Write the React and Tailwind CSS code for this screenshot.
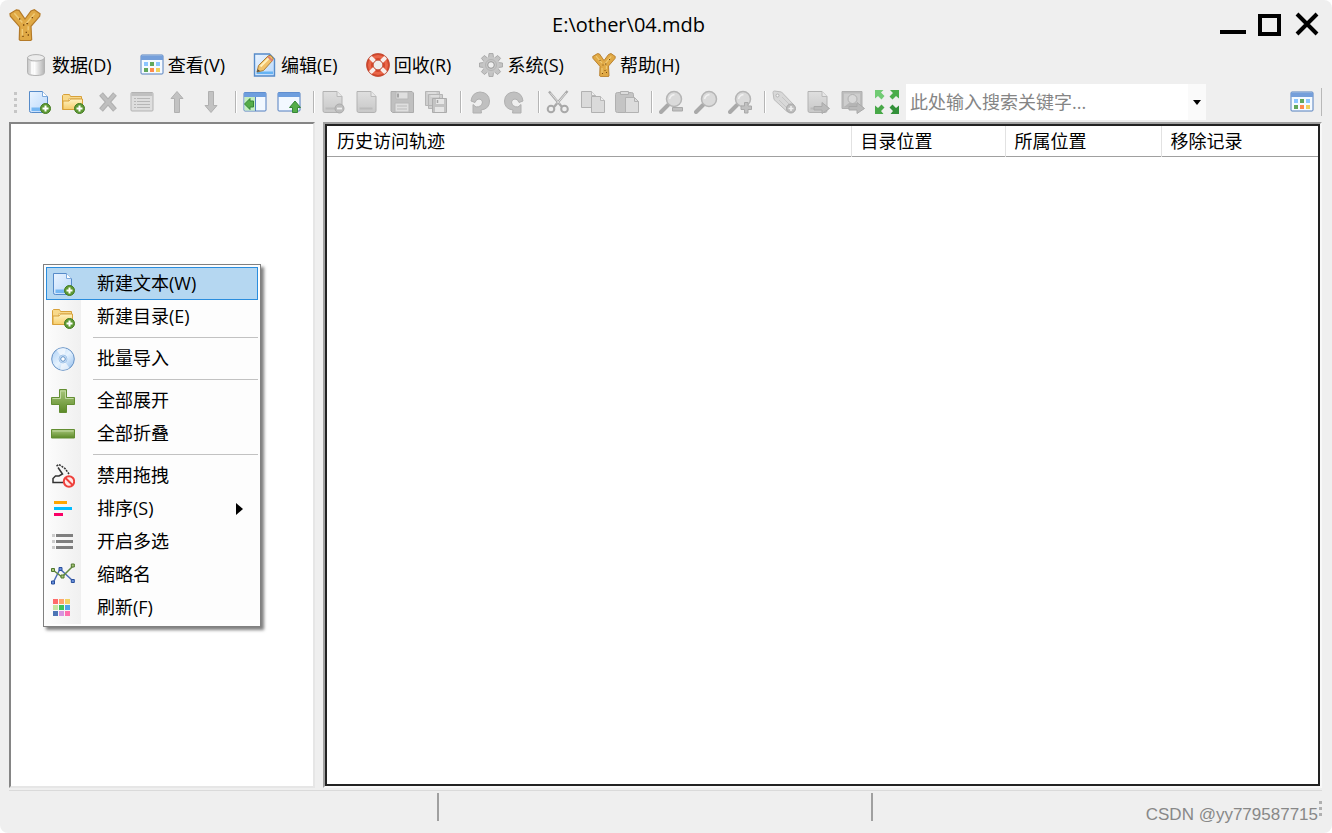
import clsx from 'clsx';

const Svg = ({ children, className = 'h-6 w-6' }) => (
  <svg viewBox="0 0 24 24" fill="none" className={clsx('shrink-0', className)} aria-hidden="true">
    {children}
  </svg>
);

const Gradients = () => (
  <svg className="absolute h-0 w-0" aria-hidden="true">
    <defs>
      <linearGradient id="paper" x1="0" y1="0" x2="1" y2="1">
        <stop offset="0" stopColor="#eaf4ff" />
        <stop offset="1" stopColor="#b9d8fb" />
      </linearGradient>
      <linearGradient id="gray" x1="0" y1="0" x2="0" y2="1">
        <stop offset="0" stopColor="#dfdfdf" />
        <stop offset="1" stopColor="#c8c8c8" />
      </linearGradient>
      <linearGradient id="metal" x1="0" y1="0" x2="1" y2="0">
        <stop offset="0" stopColor="#c4c4c4" />
        <stop offset="0.4" stopColor="#ffffff" />
        <stop offset="1" stopColor="#b2b2b2" />
      </linearGradient>
      <linearGradient id="green" x1="0" y1="0" x2="0" y2="1">
        <stop offset="0" stopColor="#a9c77c" />
        <stop offset="1" stopColor="#5c8a27" />
      </linearGradient>
      <linearGradient id="folder" x1="0" y1="0" x2="0" y2="1">
        <stop offset="0" stopColor="#fff3c4" />
        <stop offset="1" stopColor="#f6cd6b" />
      </linearGradient>
      <linearGradient id="disc" x1="0" y1="0" x2="1" y2="1">
        <stop offset="0" stopColor="#a9cdf3" />
        <stop offset="0.5" stopColor="#e6f3ff" />
        <stop offset="1" stopColor="#8cb9ea" />
      </linearGradient>
    </defs>
  </svg>
);

const PlusBadge = () => (
  <>
    <circle cx="18.500" cy="18.500" r="5" fill="#5f9a35" stroke="#437a20" />
    <path d="M18.500 15.500v6M15.500 18.500h6" stroke="#fff" strokeWidth="2" />
  </>
);

const Logo = ({ className }) => (
  <Svg className={className}>
    <path
      d="M.700 3.500 5.500.600l2 .400 4.500 6.500 4.500-6 2.500-1 4.300 3-.300 2-6.500 7.500.500 10-1 .700H8.500l-.800-.800.300-9.500-7-8Z"
      fill="#e0a945"
      stroke="#b47a28"
      strokeWidth=".9"
    />
    <path d="m4 3.200 6 7M19.200 3.400l-6.700 8M10 15v5M14.400 13v3" stroke="#efca76" strokeWidth="1.100" />
    <path d="M10.500 12h1M13 11h1.300M12.500 17.500h1M10 20.500h1M14 19.500h1M7.500 7.500h1M17 6.500h1" stroke="#79480d" />
  </Svg>
);

const NewTextIcon = () => (
  <Svg>
    <path d="M2.500 1.500h13l5 5v14.200q0 1.800-1.800 1.800H4.300q-1.800 0-1.800-1.800Z" fill="url(#paper)" stroke="#568bc9" />
    <path d="M15.500 1.500v5h5" fill="#fff" stroke="#7ba9dc" />
    <path d="M4.500 17.500h11v3.500h-11Z" fill="#75b7f2" />
    <PlusBadge />
  </Svg>
);

const NewFolderIcon = () => (
  <Svg>
    <path d="M1.500 19.500v-14l1-1h6l1 2h11v13Z" fill="#f8d98b" stroke="#d8a13a" />
    <path d="M7.500 8.500h12v3h-12Z" fill="#fff" stroke="#e6c272" />
    <path d="M2 19.500v-8.500h6l1.500-2H21.500v10.500Z" fill="url(#folder)" stroke="#d8a13a" />
    <PlusBadge />
  </Svg>
);

const DatabaseIcon = () => (
  <Svg>
    <path d="M3.500 4.500v15q0 3 8.500 3t8.500-3v-15" fill="url(#metal)" stroke="#b3b3b3" />
    <ellipse cx="12" cy="4.800" rx="8.500" ry="3.200" fill="#ececec" stroke="#b0b0b0" />
    <path d="M8 9v12" stroke="#fff" strokeWidth="1.500" />
  </Svg>
);

const CalendarIcon = () => (
  <Svg>
    <rect x="1" y="2" width="22" height="19" rx="1" fill="#f5faff" stroke="#5580be" />
    <path d="M1 2.500h22v4.500H1Z" fill="#759fda" />
    <path d="M4 9h4v4H4ZM16 9h4v4h-4Z" fill="#8bc5ff" />
    <path d="M10 9h4v4h-4ZM4 15h4v4H4Z" fill="#61a75b" />
    <path d="M10 15h4v4h-4Z" fill="#ff8a4d" />
    <path d="M16 15h4v4h-4Z" fill="#efd15b" />
  </Svg>
);

const EditIcon = () => (
  <Svg>
    <path d="M1.500 1h15l5 5v17h-20Z" fill="url(#paper)" stroke="#568bc9" strokeWidth="1.400" />
    <path d="M3.500 18.500H20v2.500H3.500Z" fill="#65b3f3" />
    <path d="m4 19 1.500-6.500L15 3q2-1.500 4 .5t.5 4L10.500 17.500Z" fill="#f1c26a" stroke="#a97e39" />
    <path d="m7.500 13.500 8.500-8.500" stroke="#fff0bc" strokeWidth="2" />
    <path d="m15 3.500 4.500 4.500" stroke="#df8171" strokeWidth="2" />
    <path d="m4 19 .700-2.800L7 18Z" fill="#4e4a45" />
  </Svg>
);

const LifebuoyIcon = () => (
  <Svg>
    <circle cx="12" cy="12" r="8.200" stroke="#d4472b" strokeWidth="7" />
    <circle cx="12" cy="12" r="8.500" stroke="#e9674a" strokeWidth="3" />
    <path d="m4 4 4.500 4.500M20 4l-4.500 4.500M4 20l4.500-4.500M20 20l-4.500-4.500" stroke="#f8eeeb" strokeWidth="4" />
    <circle cx="12" cy="12" r="11.400" stroke="#b84a35" strokeWidth=".700" />
    <circle cx="12" cy="12" r="4.800" stroke="#b84a35" strokeWidth=".700" />
  </Svg>
);

// eight teeth on a two-tone ring
const GearIcon = () => (
  <Svg>
    {[0, 45, 90, 135].map((angle) => (
      <path
        key={angle}
        d="M10 .500h4l.500 4v15l-.500 4h-4l-.500-4v-15Z"
        transform={`rotate(${angle} 12 12)`}
        fill="#c4c4c4"
        stroke="#a2a2a2"
        strokeWidth=".8"
      />
    ))}
    <circle cx="12" cy="12" r="5.800" stroke="#c6c6c6" strokeWidth="5" />
    <circle cx="12" cy="12" r="5.500" stroke="#b4b4b4" />
    <circle cx="12" cy="12" r="3.300" fill="#efefef" stroke="#999" />
  </Svg>
);

const DeleteIcon = () => (
  <Svg>
    <path d="m5 4 14 16M19 4 5 20" stroke="#b0b0b0" strokeWidth="5" />
    <path d="m5.500 4.500 13 15M18.500 4.500l-13 15" stroke="#bfbfbf" strokeWidth="3" />
  </Svg>
);

const PropertiesIcon = () => (
  <Svg>
    <rect x="1" y="2.500" width="22" height="18.500" rx="1" fill="#dedede" stroke="#b3b3b3" />
    <path d="M1.500 3h21v3h-21Z" fill="#c0c0c0" />
    <path d="M4 8.500h2M4 11.500h2M4 14.500h2M4 17.500h2M7 8.500h13M7 11.500h13M7 14.500h13M7 17.500h13" stroke="#b7b7b7" />
  </Svg>
);

const ArrowIcon = ({ down }) => (
  <Svg>
    <path
      d={down ? 'M9.500 1.500h5v14H18l-6 7-6-7h3.500Z' : 'M9.500 22.500h5v-14H18l-6-7-6 7h3.500Z'}
      fill="#c2c2c2"
      stroke="#b0b0b0"
    />
  </Svg>
);

const PanelIcon = ({ up }) => (
  <Svg>
    <rect x="1" y="2.500" width="22" height="18.500" rx="1" fill="#f2f8ff" stroke="#527fc0" />
    <path d="M1 2.500h22V7H1Z" fill="#6e9ede" />
    {up ? (
      <path d="M15.500 22.500h5v-5h3L18 11l-5.500 6.500h3Z" fill="#55ad48" stroke="#358637" />
    ) : (
      <>
        <path d="M1.500 7H12v13.500H1.500Z" fill="#c5efbf" />
        <path d="M12.500 7v14" stroke="#527fc0" />
        <path d="M10.500 11v6H7v2.500L1.500 14 7 8.500V11Z" fill="#55ad48" stroke="#358637" />
      </>
    )}
  </Svg>
);

const GrayPageIcon = ({ badge }) => (
  <Svg>
    <path d="M2 1.500h14l5 5v14.200q0 1.800-1.800 1.800H3.800q-1.800 0-1.800-1.800Z" fill="url(#gray)" stroke="#b2b2b2" />
    <path d="M16 1.500v5h5" fill="#e8e8e8" stroke="#bababa" />
    <path d="M4.500 18.500h13" stroke="#bbb" strokeWidth="2" />
    {badge === 'minus' && (
      <>
        <circle cx="18.500" cy="18.500" r="4.500" fill="#bdbdbd" stroke="#ababab" />
        <path d="M16 18.500h5" stroke="#eee" strokeWidth="1.800" />
      </>
    )}
    {badge === 'arrow' && <path d="M8 16.500h8v-4l7.500 6-7.500 5v-3.500H8Z" fill="#bbb" stroke="#aaa" />}
  </Svg>
);

const SaveIcon = () => (
  <Svg>
    <path d="M1 1.500h21l1.500 1.500v19.500H2.500L1 21Z" fill="#c0c0c0" stroke="#acacac" />
    <path d="M6 2h12v7H6ZM5 13h14v9H5Z" fill="#dfdfdf" stroke="#b8b8b8" />
    <path d="M8 3.500v4" stroke="#a5a5a5" strokeWidth="2" />
    <path d="M7 16h10M7 19h10" stroke="#bbb" />
  </Svg>
);

const SaveAllIcon = () => (
  <Svg>
    <path d="M1.500 1.500h14v14h-14ZM4.500 4.500h14v14h-14Z" fill="#cecece" stroke="#b5b5b5" />
    <path d="M3.500 3h9M6.500 6h9" stroke="#e2e2e2" strokeWidth="1.500" />
    <path d="M8.500 8.500h14v14h-14Z" fill="#c3c3c3" stroke="#acacac" />
    <path d="M12 9h8v5h-8ZM11 17h9v5h-9Z" fill="#e6e6e6" />
    <path d="M13.500 10v3" stroke="#a5a5a5" strokeWidth="1.500" />
  </Svg>
);

const TurnIcon = ({ flip }) => (
  <Svg>
    <path
      d="M3 11q1-8.500 9-9 9 .5 9.500 9 0 8-8.500 9l.5 3H5v-8.500l3 2.500q6 0 6.500-5-.5-3-3.500-3t-4 3.500Z"
      transform={flip ? 'matrix(-1 0 0 1 24 0)' : undefined}
      fill="#c0c0c0"
      stroke="#b0b0b0"
    />
  </Svg>
);

const CutIcon = () => (
  <Svg>
    <path d="M3 1.500 16 17M21.500 1 8 17" stroke="#aaa" strokeWidth="2.400" />
    <path d="m4.500 3 9 10.500M20 3l-9 10.500" stroke="#dedede" />
    <circle cx="5" cy="19" r="3.300" stroke="#a8a8a8" strokeWidth="2" />
    <circle cx="18.500" cy="19" r="3.300" stroke="#a8a8a8" strokeWidth="2" />
  </Svg>
);

const CopyIcon = () => (
  <Svg>
    <path d="M.500 1.500h10l4 4v12H.500Z" fill="#dadada" stroke="#b1b1b1" />
    <path d="M10.500 6.500h9l4 4v12h-13Z" fill="#dadada" stroke="#b1b1b1" />
    <path d="M10.500 1.500v4h4M19.500 6.500v4h4" fill="#eee" stroke="#b8b8b8" />
  </Svg>
);

const PasteIcon = () => (
  <Svg>
    <rect x=".500" y="2.500" width="18" height="20" rx="2" fill="#c4c4c4" stroke="#b0b0b0" />
    <path d="M5.500 4.500v-3h8v3Z" fill="#dcdcdc" stroke="#b0b0b0" />
    <path d="M10.500 7.500h9l4 4v11h-13Z" fill="#dcdcdc" stroke="#b2b2b2" />
    <path d="M19.500 7.500v4h4" stroke="#b2b2b2" />
  </Svg>
);

const ZoomIcon = ({ badge }) => (
  <Svg>
    <path d="m2 22 7-7" stroke="#a9a9a9" strokeWidth="4" strokeLinecap="round" />
    <circle cx="15" cy="9" r="7.500" fill="#dadada" stroke="#b5b5b5" strokeWidth="1.500" />
    <path d="M10.500 9q1-4 5-4.500" stroke="#f1f1f1" strokeWidth="1.500" />
    {badge === 'out' && <path d="M13.500 17.500h10V21h-10Z" fill="#c0c0c0" stroke="#a9a9a9" />}
    {badge === 'in' && (
      <path d="M16.500 12.500h3.500V16h3.500v3.500H20V23h-3.500v-3.500H13V16h3.500Z" fill="#c0c0c0" stroke="#a9a9a9" />
    )}
  </Svg>
);

const TagIcon = () => (
  <Svg>
    <path d="M1 2.500Q1 1 2.500 1l7 1L22 15l-6.500 7L2 9.500Z" fill="#d8d8d8" stroke="#bbb" />
    <circle cx="5.500" cy="5.500" r="1.500" fill="#f3f3f3" stroke="#b3b3b3" />
    <path d="m10 7 9 9M7 10l8 8" stroke="#c6c6c6" />
    <circle cx="19" cy="18.500" r="4.500" fill="#bdbdbd" stroke="#a7a7a7" />
    <path d="M19 16v5M16.500 18.500h5" stroke="#eee" strokeWidth="1.600" />
  </Svg>
);

const PictureIcon = () => (
  <Svg>
    <path d="M1 1.500h20v17H1Z" fill="#bcbcbc" stroke="#b0b0b0" />
    <path d="M3 3.500h16v13H3Z" fill="#cdcdcd" />
    <circle cx="11.500" cy="9" r="4.500" fill="#d8d8d8" stroke="#b0b0b0" />
    <path d="m3 17 5-4h7l4 4" fill="#b5b5b5" />
    <path d="M8 16.500h8v-4l7.500 6-7.500 5V20H8Z" fill="#bababa" stroke="#a9a9a9" />
  </Svg>
);

const ExpandIcon = () => (
  <Svg>
    <path d="M0 0h8.500L6 2.500l3.500 3.500L6.500 9.500 3 6 0 8.500Z" fill="#71cb74" />
    <path d="M24 0v8.500L21 6l-3.500 3.500-3-3L18 3l-3-3Z" fill="#4bac4b" />
    <path d="M0 24v-8.500L3 18l3.500-3.500 3 3L6 21l2.500 3Z" fill="#47a847" />
    <path d="M24 24h-8.500l2.500-3-3.500-3.500 3-3L21 18l3-2.500Z" fill="#329039" />
  </Svg>
);

const DiscIcon = () => (
  <Svg>
    <circle cx="12" cy="12" r="11.300" fill="url(#disc)" stroke="#6692c5" />
    <path d="m12 12-6.500-9q5-3 9.500-1.500ZM12 12l6.500 9q-5 3-9.500 1.500Z" fill="#fff" fillOpacity=".6" />
    <circle cx="12" cy="12" r="4" fill="#d4e8fc" stroke="#a5c6ea" />
    <circle cx="12" cy="12" r="2.300" fill="#fff" stroke="#5c8ec4" />
  </Svg>
);

const PlusIcon = () => (
  <Svg>
    <path d="M8.500.5h7v8h8v7h-8v8h-7v-8h-8v-7h8Z" fill="url(#green)" stroke="#638e32" />
    <path d="M9.500 9.500V2h5v7.500h8M1.500 9.500h8" stroke="#c2d9a2" />
  </Svg>
);

const MinusIcon = () => (
  <Svg>
    <path d="M.5 7.500h23v8.500H.5Z" fill="url(#green)" stroke="#638e32" />
    <path d="M1.500 9h21" stroke="#c2d9a2" />
  </Svg>
);

const NoDragIcon = () => (
  <Svg>
    <path d="M12 18.500H2v-4l2.500-2.500H8l3.500-2L7 3.500" stroke="#333" strokeWidth="1.500" />
    <path d="M5.500 2 8 .5l6 4L18 10" stroke="#333" strokeWidth="1.500" strokeDasharray="2 1" />
    <circle cx="18" cy="17.500" r="5.200" fill="#ffe8e6" stroke="#ee403c" strokeWidth="2" />
    <path d="m14.500 14 7 7" stroke="#ee403c" strokeWidth="2" />
  </Svg>
);

const SortIcon = () => (
  <Svg>
    <path d="M3 5.500h13" stroke="#ffa500" strokeWidth="3" />
    <path d="M3 11.500h18" stroke="#00bcff" strokeWidth="3" />
    <path d="M3 17.500h9" stroke="#fa0066" strokeWidth="3" />
  </Svg>
);

const ListIcon = () => (
  <Svg>
    <path d="M5 5.500h17M5 11.500h17M5 17.500h17" stroke="#7f7f7f" strokeWidth="3" />
    <path d="M1 5.500h3M1 11.500h3M1 17.500h3" stroke="#cccccc" strokeWidth="3" />
  </Svg>
);

const CurveIcon = () => (
  <Svg>
    <path d="m2 20 7-14 13 12" stroke="#4e6db8" strokeWidth="1.500" />
    <path d="m2 7 9 7L22 3" stroke="#638b42" strokeWidth="1.500" />
    <path d="M.5 5.500h3v3h-3ZM10 12h3v3h-3ZM20.300 1h3v3h-3Z" fill="#a8c678" stroke="#4e762e" />
    <path d="M.5 18h3v3h-3ZM8 4.500h3v3H8ZM20.300 16.500h3v3h-3Z" fill="#6990db" stroke="#294f9c" />
  </Svg>
);

const RefreshIcon = () => {
  const colors = ['#ff6b6b', '#ffa46b', '#f1d466', '#c8e6a1', '#3bc45a', '#4fa3e9', '#4c75b5', '#d894df', '#ff70ad'];
  return (
    <Svg>
      {colors.map((color, i) => (
        <rect key={color} x={2 + (i % 3) * 6} y={3 + Math.floor(i / 3) * 6} width="5" height="5" fill={color} />
      ))}
    </Svg>
  );
};

const menus = [
  { label: '数据(D)', icon: <DatabaseIcon /> },
  { label: '查看(V)', icon: <CalendarIcon /> },
  { label: '编辑(E)', icon: <EditIcon /> },
  { label: '回收(R)', icon: <LifebuoyIcon /> },
  { label: '系统(S)', icon: <GearIcon /> },
  { label: '帮助(H)', icon: <Logo className="h-6 w-6" /> },
];

const toolGroups = [
  {
    width: 'w-[196px]',
    tools: [
      <NewTextIcon />,
      <NewFolderIcon />,
      <DeleteIcon />,
      <PropertiesIcon />,
      <ArrowIcon />,
      <ArrowIcon down />,
    ],
  },
  { width: 'w-[58px]', tools: [<PanelIcon />, <PanelIcon up />] },
  {
    width: 'w-[127px]',
    tools: [<GrayPageIcon badge="minus" />, <GrayPageIcon />, <SaveIcon />, <SaveAllIcon />],
  },
  { width: 'w-[58px]', tools: [<TurnIcon />, <TurnIcon flip />] },
  { width: 'w-[93px]', tools: [<CutIcon />, <CopyIcon />, <PasteIcon />] },
  { width: 'w-[93px]', tools: [<ZoomIcon badge="out" />, <ZoomIcon />, <ZoomIcon badge="in" />] },
  {
    width: 'w-[127px]',
    tools: [<TagIcon />, <GrayPageIcon badge="arrow" />, <PictureIcon />, <ExpandIcon />],
  },
];

const contextItems = [
  { label: '新建文本(W)', icon: <NewTextIcon />, active: true },
  { label: '新建目录(E)', icon: <NewFolderIcon /> },
  null,
  { label: '批量导入', icon: <DiscIcon /> },
  null,
  { label: '全部展开', icon: <PlusIcon /> },
  { label: '全部折叠', icon: <MinusIcon /> },
  null,
  { label: '禁用拖拽', icon: <NoDragIcon /> },
  { label: '排序(S)', icon: <SortIcon />, submenu: true },
  { label: '开启多选', icon: <ListIcon /> },
  { label: '缩略名', icon: <CurveIcon /> },
  { label: '刷新(F)', icon: <RefreshIcon /> },
];

const TitleBar = () => (
  <header className="flex h-[50px] items-center pr-3 pl-[9px]">
    <div className="flex-1">
      <Logo className="h-8 w-8" />
    </div>
    <h1 className="text-[20px] leading-6">E:\other\04.mdb</h1>
    <div className="ml-[72px] flex flex-1 justify-end gap-[11px]">
      <button aria-label="最小化">
        <svg viewBox="0 0 26 26" className="h-[26px] w-[26px]">
          <path d="M0 20h26" stroke="#000" strokeWidth="4" />
        </svg>
      </button>
      <button aria-label="最大化">
        <svg viewBox="0 0 26 26" className="h-[26px] w-[26px]">
          <path d="M3 4h19v18H3Z" stroke="#000" strokeWidth="4" fill="none" />
        </svg>
      </button>
      <button aria-label="关闭">
        <svg viewBox="0 0 26 26" className="h-[26px] w-[26px]">
          <path d="m3 2 20 20M23 2 3 22" stroke="#000" strokeWidth="4" />
        </svg>
      </button>
    </div>
  </header>
);

const MenuBar = () => (
  <nav className="flex h-8 items-center gap-7 pb-[2px] pl-6">
    {menus.map((menu) => (
      <button key={menu.label} className="flex items-center gap-1 whitespace-nowrap">
        {menu.icon}
        {menu.label}
      </button>
    ))}
  </nav>
);

const ToolBar = () => (
  <div className="flex h-10 items-center pl-3">
    <div className="mr-[9px] flex w-1.5 flex-col items-center gap-[3px]">
      {[0, 1, 2, 3].map((dot) => (
        <span key={dot} className="h-[3px] w-[3px] bg-[#c6c6c6]" />
      ))}
    </div>

    {toolGroups.map((group, i) => (
      <div key={i} className="flex items-center">
        {i > 0 && <span className="mr-1.5 ml-3 h-[22px] w-[2px] border-r border-l border-r-white border-l-[#b5b5b5]" />}
        <div className={clsx('flex justify-between', group.width)}>
          {group.tools.map((tool, j) => (
            <button key={j}>{tool}</button>
          ))}
        </div>
      </div>
    ))}

    <div className="ml-[7px] flex h-9 w-[300px] bg-white">
      <input
        aria-label="搜索"
        placeholder="此处输入搜索关键字..."
        className="min-w-0 flex-1 px-1 outline-none placeholder:text-[#858585]"
      />
      <button aria-label="展开" className="flex w-[18px] items-center justify-center bg-[#fafafa]">
        <svg viewBox="0 0 8 5" className="h-[5px] w-2">
          <path d="M0 0h8L4 5Z" fill="#000" />
        </svg>
      </button>
    </div>

    <button className="mr-[7px] ml-auto">
      <CalendarIcon />
    </button>
    <span className="mr-[10px] h-7 w-px bg-[#b8b8b8]" />
  </div>
);

const HistoryList = () => (
  <main className="flex flex-1 border-2 border-t-[#a0a0a0] border-r-[#f8f8f8] border-b-[#f8f8f8] border-l-[#a0a0a0]">
    <div className="flex-1 border-2 border-[#222222] bg-white">
      <table className="w-full table-fixed border-collapse">
        <thead>
          <tr className="h-[30px] border-b border-[#a0a0a0] text-left">
            <th className="border-r border-[#e2e2e2] pl-[10px] font-normal">历史访问轨迹</th>
            <th className="w-[154px] border-r border-[#e2e2e2] pl-[9px] font-normal">目录位置</th>
            <th className="w-[156px] border-r border-[#e2e2e2] pl-[9px] font-normal">所属位置</th>
            <th className="w-[157px] pl-[9px] font-normal">移除记录</th>
          </tr>
        </thead>
        <tbody />
      </table>
    </div>
  </main>
);

const StatusBar = () => (
  <footer className="mt-[2px] mr-[10px] ml-[9px] flex h-[43px] items-center border-t border-[#dadada]">
    <div className="mb-[10px] h-7 w-[430px] border-r-2 border-[#a0a0a0]" />
    <div className="mb-[10px] h-7 w-[434px] border-r-2 border-[#a0a0a0]" />
    <div className="relative mt-1 ml-auto pr-1">
      <span className="font-['Liberation_Sans',sans-serif] text-[17px] text-[#888888]">CSDN @yy779587715</span>
      <div className="absolute top-0 right-0 grid gap-[3px]">
        {[0, 1, 2].map((dot) => (
          <span key={dot} className="h-[3px] w-[3px] bg-[#b0b0b0]" />
        ))}
      </div>
    </div>
  </footer>
);

const ContextMenu = () => (
  <div
    role="menu"
    className="absolute top-[264px] left-[43px] w-[218px] border border-[#808080] bg-[#fdfdfd] p-[2px] shadow-[3px_3px_3px_rgba(0,0,0,0.5)]"
  >
    <div className="bg-linear-to-r from-[#fcfcfc] to-[#f0f0f0] bg-[length:35px_100%] bg-no-repeat">
      {contextItems.map((item, i) =>
        item ? (
          <button
            key={item.label}
            role="menuitem"
            className={clsx(
              'flex h-[33px] w-full items-center border pl-1',
              item.active ? 'border-[#2a8dde] bg-[#b5d7f1]' : 'border-transparent',
            )}
          >
            {item.icon}
            <span className="ml-[22px] pb-[2px]">{item.label}</span>
            {item.submenu && (
              <svg viewBox="0 0 7 12" className="mr-[14px] ml-auto h-3 w-[7px]">
                <path d="M0 0v12l7-6Z" fill="#000" />
              </svg>
            )}
          </button>
        ) : (
          <div key={i} className="flex h-[9px] items-center pl-[47px]">
            <span className="h-px w-full bg-[#c2c2c2]" />
          </div>
        ),
      )}
    </div>
  </div>
);

export default function App() {
  return (
    <div className="min-h-screen bg-white">
      <Gradients />
      <div className="relative flex min-h-screen flex-col rounded-lg bg-[#efefef] font-['Open_Sans','Noto_Sans_CJK_SC',sans-serif] text-[18px] leading-6 text-black">
        <TitleBar />
        <MenuBar />
        <ToolBar />
        <div className="flex flex-1 gap-2 pr-[10px] pl-[9px]">
          <aside className="w-[306px] border-2 border-t-[#858585] border-r-[#e6e6e6] border-b-[#e6e6e6] border-l-[#858585] bg-white" />
          <HistoryList />
        </div>
        <StatusBar />
        <ContextMenu />
      </div>
    </div>
  );
}
